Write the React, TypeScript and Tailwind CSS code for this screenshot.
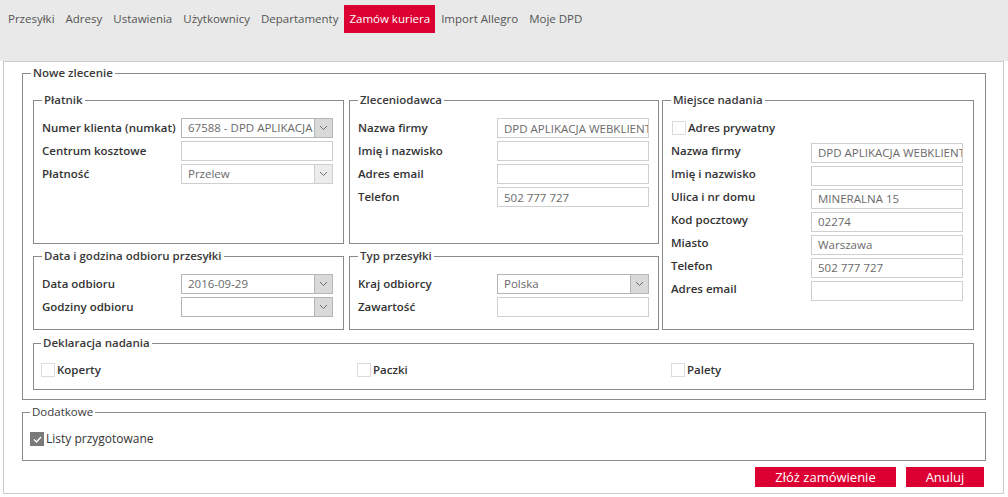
import React from "react";

const tabs = ["Przesyłki", "Adresy", "Ustawienia", "Użytkownicy", "Departamenty", "Zamów kuriera", "Import Allegro", "Moje DPD"];

function Chevron() {
  return (
    <svg width="9" height="6" viewBox="0 0 9 6" fill="none">
      <path d="M1 1 L4.5 4.5 L8 1" stroke="#6b6b6b" strokeWidth="1" />
    </svg>
  );
}

function Legend({ children, shift }: { children: React.ReactNode; shift?: boolean }) {
  return (
    <legend className={`px-[2px] text-[11.5px] leading-[16px] font-semibold text-[#3a3a3a] ${shift ? "-ml-[2px]" : ""}`}>
      {children}
    </legend>
  );
}

function Row({ label, children }: { label: string; children: React.ReactNode }) {
  return (
    <div className="flex items-center h-[20px]">
      <span className="w-[139px] shrink-0 text-[11.5px] font-semibold text-[#333] whitespace-nowrap">{label}</span>
      {children}
    </div>
  );
}

function Input({ value = "" }: { value?: string }) {
  return (
    <input
      readOnly
      value={value}
      className="w-[152px] h-[20px] border border-[#cfcfcf] bg-white text-[11.5px] text-[#6a6a6a] pl-[6px] outline-none"
    />
  );
}

function Select({ value = "", dark }: { value?: string; dark?: boolean }) {
  return (
    <div className={`w-[152px] h-[20px] flex border ${dark ? "border-[#b5b5b5]" : "border-[#cfcfcf]"} bg-white`}>
      <div className="flex-1 min-w-0 overflow-hidden whitespace-nowrap text-[11.5px] text-[#6a6a6a] pl-[6px] leading-[18px]">{value}</div>
      <div className={`w-[18px] shrink-0 flex items-center justify-center border-l ${dark ? "border-[#b5b5b5] bg-[#d9d9d9]" : "border-[#cfcfcf] bg-[#ececec]"}`}>
        <Chevron />
      </div>
    </div>
  );
}

function Checkbox({ label, checked, bold = true }: { label: string; checked?: boolean; bold?: boolean }) {
  return (
    <div className="flex items-center h-[20px]">
      {checked ? (
        <span className="w-[14px] h-[14px] bg-[#7a7a7a] flex items-center justify-center">
          <svg width="9" height="7" viewBox="0 0 9 7" fill="none">
            <path d="M1 3.5 L3.5 6 L8 1" stroke="#fff" strokeWidth="1.3" />
          </svg>
        </span>
      ) : (
        <span className="w-[14px] h-[14px] border border-[#dcdcdc] bg-white" />
      )}
      <span className={`ml-[2px] text-[#333] ${bold ? "font-semibold text-[11.5px]" : "font-medium text-[12px]"}`}>{label}</span>
    </div>
  );
}

export default function App() {
  return (
    <div className="w-[1008px] h-[497px] bg-white font-['Open_Sans',sans-serif] overflow-hidden">
      <div className="h-[61px] bg-[#e8e9e8] pt-[5px] pl-[3px] flex items-start gap-[1px]">
        {tabs.map((t) => (
          <div
            key={t}
            className={`h-[28px] px-[5px] flex items-center text-[11.5px] whitespace-nowrap ${
              t === "Zamów kuriera" ? "bg-[#dc0032] text-white" : "text-[#555]"
            }`}
          >
            {t}
          </div>
        ))}
      </div>

      <div className="ml-[3px] w-[1001px] h-[433px] border border-[#cccccc] pt-[3px] pl-[18px] pr-[17px]">
        <fieldset className="h-[335px] border border-[#8a8a8a] pl-[10px] pr-[11px] pt-[11px]">
          <Legend shift>Nowe zlecenie</Legend>
          <div className="flex">
            <div className="w-[311px] flex flex-col gap-[4px]">
              <fieldset className="h-[152px] border border-[#8a8a8a] pl-[8px] pt-[10px]">
                <Legend>Płatnik</Legend>
                <div className="flex flex-col gap-[3px]">
                  <Row label="Numer klienta (numkat)">
                    <Select value="67588 - DPD APLIKACJA" dark />
                  </Row>
                  <Row label="Centrum kosztowe">
                    <Input />
                  </Row>
                  <Row label="Płatność">
                    <Select value="Przelew" />
                  </Row>
                </div>
              </fieldset>
              <fieldset className="h-[82px] border border-[#8a8a8a] pl-[8px] pt-[10px]">
                <Legend>Data i godzina odbioru przesyłki</Legend>
                <div className="flex flex-col gap-[3px]">
                  <Row label="Data odbioru">
                    <Select value="2016-09-29" dark />
                  </Row>
                  <Row label="Godziny odbioru">
                    <Select dark />
                  </Row>
                </div>
              </fieldset>
            </div>

            <div className="ml-[5px] w-[310px] flex flex-col gap-[4px]">
              <fieldset className="h-[152px] border border-[#8a8a8a] pl-[8px] pt-[10px]">
                <Legend>Zleceniodawca</Legend>
                <div className="flex flex-col gap-[3px]">
                  <Row label="Nazwa firmy">
                    <Input value="DPD APLIKACJA WEBKLIENT" />
                  </Row>
                  <Row label="Imię i nazwisko">
                    <Input />
                  </Row>
                  <Row label="Adres email">
                    <Input />
                  </Row>
                  <Row label="Telefon">
                    <Input value="502 777 727" />
                  </Row>
                </div>
              </fieldset>
              <fieldset className="h-[82px] border border-[#8a8a8a] pl-[8px] pt-[10px]">
                <Legend>Typ przesyłki</Legend>
                <div className="flex flex-col gap-[3px]">
                  <Row label="Kraj odbiorcy">
                    <Select value="Polska" dark />
                  </Row>
                  <Row label="Zawartość">
                    <Input />
                  </Row>
                </div>
              </fieldset>
            </div>

            <fieldset className="ml-[3px] w-[312px] h-[238px] border border-[#8a8a8a] pl-[8px] pt-[10px]">
              <Legend>Miejsce nadania</Legend>
              <div className="flex flex-col gap-[3px]">
                <div className="pl-[1px]">
                  <Checkbox label="Adres prywatny" />
                </div>
                <Row label="Nazwa firmy">
                  <span className="ml-[1px]"><Input value="DPD APLIKACJA WEBKLIENT" /></span>
                </Row>
                <Row label="Imię i nazwisko">
                  <span className="ml-[1px]"><Input /></span>
                </Row>
                <Row label="Ulica i nr domu">
                  <span className="ml-[1px]"><Input value="MINERALNA 15" /></span>
                </Row>
                <Row label="Kod pocztowy">
                  <span className="ml-[1px]"><Input value="02274" /></span>
                </Row>
                <Row label="Miasto">
                  <span className="ml-[1px]"><Input value="Warszawa" /></span>
                </Row>
                <Row label="Telefon">
                  <span className="ml-[1px]"><Input value="502 777 727" /></span>
                </Row>
                <Row label="Adres email">
                  <span className="ml-[1px]"><Input /></span>
                </Row>
              </div>
            </fieldset>
          </div>

          <fieldset className="mt-[5px] h-[55px] border border-[#8a8a8a] pl-[7px] pt-[9px]">
            <Legend>Deklaracja nadania</Legend>
            <div className="grid grid-cols-[316px_314px_1fr]">
              <Checkbox label="Koperty" />
              <Checkbox label="Paczki" />
              <Checkbox label="Palety" />
            </div>
          </fieldset>
        </fieldset>

        <fieldset className="mt-[4px] h-[57px] border border-[#8a8a8a] pl-[7px] pt-[9px]">
          <Legend>
            <span className="font-medium">Dodatkowe</span>
          </Legend>
          <Checkbox label="Listy przygotowane" checked bold={false} />
        </fieldset>

        <div className="mt-[6px] flex justify-end gap-[10px] pr-[2px]">
          <button className="w-[141px] h-[20px] bg-[#dc0032] text-white text-[13px] leading-[20px]">Złóż zamówienie</button>
          <button className="w-[78px] h-[20px] bg-[#dc0032] text-white text-[13px] leading-[20px]">Anuluj</button>
        </div>
      </div>
    </div>
  );
}
